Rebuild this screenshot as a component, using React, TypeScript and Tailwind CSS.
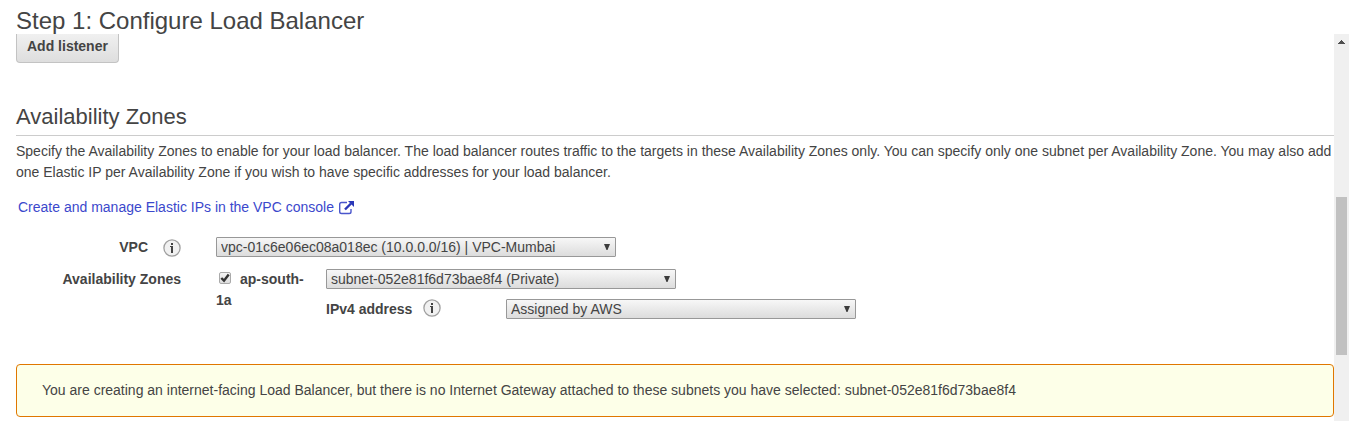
import React from "react";

function InfoIcon({ label }: { label: string }) {
  return (
    <button type="button" aria-label={label} className="block shrink-0">
      <svg width="18" height="18" viewBox="0 0 18 18" aria-hidden="true">
        <circle cx="9" cy="9" r="8.1" fill="#f1f1f1" stroke="#a0a0a0" strokeWidth="1.3" />
        <path d="M8 4h2v2H8zM7 7h3v7H8V8H7z" fill="#444" />
      </svg>
    </button>
  );
}

function Dropdown({
  id,
  label,
  value,
  width,
}: {
  id: string;
  label?: string;
  value: string;
  width: string;
}) {
  return (
    <div className={`relative ${width}`}>
      <select
        id={id}
        aria-label={label}
        className="block h-5 w-full appearance-none rounded-[1px] border border-[#989898] bg-linear-to-b from-[#f7f7f7] to-[#dcdcdc] pr-5 pl-1 text-sm leading-[18px] text-[#444]"
      >
        <option>{value}</option>
      </select>
      <svg
        className="pointer-events-none absolute top-[7px] right-1.5"
        width="6"
        height="6"
        viewBox="0 0 6 6"
        aria-hidden="true"
      >
        <path d="M0 0h6L3.5 6h-1z" fill="#3c3c3c" />
      </svg>
    </div>
  );
}

function Scrollbar() {
  return (
    <div aria-hidden="true" className="flex w-[15px] shrink-0 flex-col items-center bg-[#f0f0f0]">
      <div className="grow-[163] basis-0">
        <svg className="mt-1.5" width="7" height="4" viewBox="0 0 7 4" shapeRendering="crispEdges">
          <path d="M3 0h1v1h1v1h1v1h1v1H0V3h1V2h1V1h1z" fill="#505050" />
        </svg>
      </div>
      <div className="w-[11px] grow-[158] basis-0 bg-[#c1c1c1]" />
      <div className="grow-[66] basis-0" />
    </div>
  );
}

export default function App() {
  return (
    <div className="flex min-h-screen flex-col bg-white pr-2.5 font-['Liberation_Sans',Arial,sans-serif] text-sm leading-[21px] text-[#444]">
      <header className="px-4 pt-2">
        <h1 className="text-2xl leading-[26px]">Step 1: Configure Load Balancer</h1>
      </header>

      <div className="flex flex-1">
        <main className="min-w-0 flex-1 pb-1 pl-4">
          <button
            type="button"
            className="block h-[29px] rounded-b-[4px] border border-t-0 border-[#c3c3c3] bg-linear-to-b from-[#f0f0f0] to-[#dedede] px-2.5 pb-1 text-sm font-bold"
          >
            Add listener
          </button>

          <h2 className="mt-10 border-b border-[#ccc] pb-1 text-[22px] leading-7">
            Availability Zones
          </h2>
          <p className="mt-[5px]">
            Specify the Availability Zones to enable for your load balancer. The load balancer
            routes traffic to the targets in these Availability Zones only. You can specify only one
            subnet per Availability Zone. You may also add one Elastic IP per Availability Zone if
            you wish to have specific addresses for your load balancer.
          </p>

          <a href="#elastic-ips" className="mt-3.5 ml-0.5 flex w-fit items-center gap-[5px] text-[#3b48cc]">
            Create and manage Elastic IPs in the VPC console
            <svg width="16" height="14" viewBox="0 0 16 14" fill="none" aria-hidden="true">
              <path
                d="M8 1.5H2.5Q.7 1.5 .7 3.3v7.4q0 1.8 1.8 1.8h7.7q1.8 0 1.8-1.8V8"
                stroke="#4a56cc"
                strokeWidth="1.4"
              />
              <path d="M6 8.5l6-6" stroke="#2a37b8" strokeWidth="2.4" />
              <path d="M9 0h6v6z" fill="#2a37b8" />
            </svg>
          </a>

          <form className="mt-[19px]">
            <div className="flex items-start">
              <div className="flex w-[200px] justify-end gap-[15px] pr-[35px] font-bold">
                <label htmlFor="vpc">VPC</label>
                <div className="pt-0.5">
                  <InfoIcon label="About VPC" />
                </div>
              </div>
              <Dropdown
                id="vpc"
                value="vpc-01c6e06ec08a018ec (10.0.0.0/16) | VPC-Mumbai"
                width="w-[400px]"
              />
            </div>

            <fieldset className="mt-[11px] flex items-start">
              <div className="w-[200px] pr-[35px] text-right font-bold">Availability Zones</div>
              <div className="w-[110px] pr-4 font-bold">
                <span className="relative mr-[9px] ml-[3px] inline-block size-3">
                  <input
                    id="zone-1a"
                    type="checkbox"
                    defaultChecked
                    className="peer block size-3 appearance-none rounded-xs border border-[#aaa] bg-linear-to-b from-[#f5f5f5] to-[#dedede]"
                  />
                  <svg
                    className="pointer-events-none absolute inset-0 hidden peer-checked:block"
                    width="12"
                    height="12"
                    viewBox="0 0 12 12"
                    fill="none"
                    aria-hidden="true"
                  >
                    <path d="M2.3 6l2.7 2.7L9.7 2.5" stroke="#333" strokeWidth="2.4" />
                  </svg>
                </span>
                <label htmlFor="zone-1a">ap-south-1a</label>
              </div>
              <div>
                <Dropdown
                  id="subnet"
                  label="Subnet"
                  value="subnet-052e81f6d73bae8f4 (Private)"
                  width="w-[350px]"
                />
                <div className="mt-2.5 flex items-start">
                  <div className="flex w-[180px] items-start gap-[11px] font-bold">
                    <label htmlFor="ipv4">IPv4 address</label>
                    <InfoIcon label="About IPv4 address" />
                  </div>
                  <Dropdown id="ipv4" value="Assigned by AWS" width="w-[350px]" />
                </div>
              </div>
            </fieldset>
          </form>

          <div
            role="alert"
            className="mt-11 rounded-[4px] border border-[#e07700] bg-[#fdffe8] px-[25px] py-[15px]"
          >
            You are creating an internet-facing Load Balancer, but there is no Internet Gateway
            attached to these subnets you have selected: subnet-052e81f6d73bae8f4
          </div>
        </main>
        <Scrollbar />
      </div>
    </div>
  );
}
